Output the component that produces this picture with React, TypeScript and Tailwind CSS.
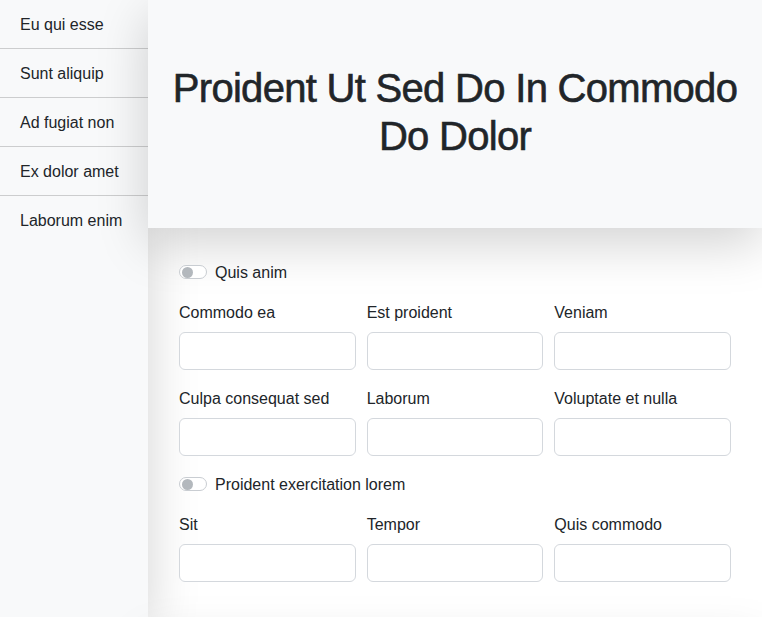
import React from "react";

const navItems = ["Eu qui esse", "Sunt aliquip", "Ad fugiat non", "Ex dolor amet", "Laborum enim"];

function Toggle({ label }: { label: string }) {
  return (
    <div className="flex items-center h-6 mb-4">
      <span className="relative w-[28px] h-[14px] rounded-full border border-[#c9cdd2] bg-white shrink-0">
        <span className="absolute left-[1.5px] top-[0.5px] w-[11px] h-[11px] rounded-full bg-[#b3b8bd]" />
      </span>
      <span className="relative top-px ml-2 text-[16px] leading-6">{label}</span>
    </div>
  );
}

function Field({ label }: { label: string }) {
  return (
    <div className="mb-4">
      <div className="relative top-px text-[16px] leading-6 mb-2">{label}</div>
      <div className="h-[38px] rounded-[6px] border border-[#d4d8dd] bg-white" />
    </div>
  );
}

export default function App() {
  return (
    <div
      className="flex h-screen overflow-hidden text-[#212529] bg-white"
      style={{ fontFamily: '"Liberation Sans", Arial, sans-serif' }}
    >
      <aside className="w-[148px] shrink-0 bg-[#f8f9fa] shadow-[0_16px_48px_rgba(0,0,0,0.175)]">
        {navItems.map((t, i) => (
          <div
            key={t}
            className={
              i < navItems.length - 1
                ? "px-5 pt-[13px] pb-[11px] text-[16px] leading-6 border-b border-[rgba(0,0,0,0.175)]"
                : "px-5 pt-[13px] pb-[11px] text-[16px] leading-6"
            }
          >
            {t}
          </div>
        ))}
      </aside>
      <main className="flex-1 flex flex-col">
        <header className="h-[228px] shrink-0 bg-[#f8f9fa] pt-16 px-3 shadow-[0_16px_48px_rgba(0,0,0,0.175)]">
          <h1 className="text-center text-[40px] leading-[48px] font-medium tracking-[-0.7px] [-webkit-text-stroke:0.6px_#212529]">
            Proident Ut Sed Do In Commodo Do Dolor
          </h1>
        </header>
        <section className="pt-8 pb-8 pl-[31px] pr-[31px] shrink-0">
          <Toggle label="Quis anim" />
          <div className="grid grid-cols-3 gap-x-[11px]">
            <Field label="Commodo ea" />
            <Field label="Est proident" />
            <Field label="Veniam" />
            <Field label="Culpa consequat sed" />
            <Field label="Laborum" />
            <Field label="Voluptate et nulla" />
          </div>
          <Toggle label="Proident exercitation lorem" />
          <div className="grid grid-cols-3 gap-x-[11px]">
            <Field label="Sit" />
            <Field label="Tempor" />
            <Field label="Quis commodo" />
          </div>
        </section>
        <div className="h-40 shrink-0 bg-white shadow-[0_16px_48px_rgba(0,0,0,0.175)]" />
      </main>
    </div>
  );
}
